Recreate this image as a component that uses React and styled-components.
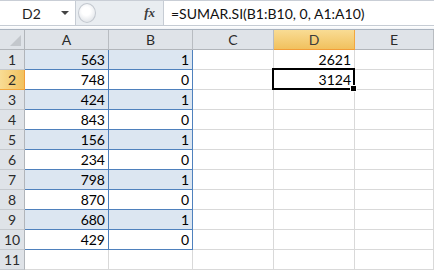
import React from 'react';
import styled, { createGlobalStyle } from 'styled-components';

const GlobalStyle = createGlobalStyle`
  html, body { margin: 0; padding: 0; background: #fff; }
  body { width: 434px; height: 270px; overflow: hidden; font-family: Lato, "Liberation Sans", sans-serif; }
`;

const Sheet = styled.div`
  width: 434px;
  height: 270px;
  display: flex;
  flex-direction: column;
  background: #fff;
  overflow: hidden;
`;

const FormulaBar = styled.div`
  height: 25px;
  display: flex;
  align-items: stretch;
  background: #e9edf1;
  border-top: 1px solid #c9ced6;
  box-sizing: border-box;
`;

const NameBox = styled.div`
  width: 76px;
  display: flex;
  align-items: center;
  justify-content: space-between;
  background: #fff;
  border-right: 1px solid #c6ccd4;
  padding: 0 6px 0 22px;
  box-sizing: border-box;
  font-size: 14px;
  color: #1e1e1e;
`;

const Arrow = styled.span`
  width: 0;
  height: 0;
  border-left: 4px solid transparent;
  border-right: 4px solid transparent;
  border-top: 4px solid #444;
`;

const Splitter = styled.div`
  width: 22px;
  display: flex;
  align-items: center;
  justify-content: flex-start;
  margin-left: 2px;
`;

const Knob = styled.div`
  width: 18px;
  height: 20px;
  border-radius: 50%;
  border: 1px solid #c3c8cf;
  background: radial-gradient(circle at 45% 40%, #ffffff 0 30%, #e6e9ed 70%);
  box-sizing: border-box;
`;

const FxArea = styled.div`
  flex: 0 0 63px;
  display: flex;
  align-items: center;
  justify-content: flex-end;
  padding-right: 8px;
  box-sizing: border-box;
  font-family: "Liberation Serif", serif;
  font-style: italic;
  font-weight: bold;
  font-size: 13px;
  color: #3c3c3c;
`;

const FormulaInput = styled.div`
  flex: 1;
  display: flex;
  align-items: center;
  background: #fff;
  border-left: 1px solid #c6ccd4;
  padding-left: 7px;
  font-size: 14px;
  color: #111;
`;

const Divider = styled.div`
  height: 5px;
  background: #fff;
  border-top: 1px solid #c6ccd4;
  border-bottom: 1px solid #a9b3bf;
  box-sizing: border-box;
  background: linear-gradient(#ffffff, #f2f4f7);
`;

const Grid = styled.div`
  display: grid;
  grid-template-columns: 25px 84px 84px 81px 81px 79px;
  grid-auto-rows: 20px;
`;

const Corner = styled.div`
  position: relative;
  background: #dfe3e8;
  border-right: 1px solid #b1b5ba;
  border-bottom: 1px solid #b1b5ba;
  box-sizing: border-box;
  &::after {
    content: '';
    position: absolute;
    right: 3px;
    bottom: 3px;
    width: 0;
    height: 0;
    border-left: 11px solid transparent;
    border-bottom: 11px solid #c3c7cc;
  }
`;

const ColHead = styled.div`
  display: flex;
  align-items: center;
  justify-content: center;
  box-sizing: border-box;
  font-size: 14px;
  color: ${p => (p.$active ? '#3b3b3b' : '#2b2b2b')};
  background: ${p => (p.$active ? 'linear-gradient(#f9dc94, #f1c15e)' : '#dfe3e8')};
  border-right: 1px solid ${p => (p.$active ? '#f2a73f' : '#b8bcc1')};
  border-bottom: 1px solid ${p => (p.$active ? '#f29d38' : '#b1b5ba')};
`;

const RowHead = styled.div`
  display: flex;
  align-items: center;
  justify-content: center;
  box-sizing: border-box;
  font-size: 14px;
  color: #2b2b2b;
  background: ${p => (p.$active ? 'linear-gradient(90deg, #f9dc94, #f1c15e)' : '#dfe3e8')};
  border-right: 1px solid ${p => (p.$active ? '#f29d38' : '#b1b5ba')};
  border-bottom: 1px solid ${p => (p.$active ? '#f2a73f' : '#c5c9ce')};
`;

const Cell = styled.div`
  position: relative;
  display: flex;
  align-items: center;
  justify-content: flex-end;
  padding-right: 3px;
  box-sizing: border-box;
  font-size: 14px;
  color: #000;
  background: ${p => (p.$band ? '#dce6f1' : '#fff')};
  border-right: 1px solid ${p => (p.$table ? '#4f81bd' : '#d9d9d9')};
  border-bottom: 1px solid ${p => (p.$table ? '#4f81bd' : '#d9d9d9')};
`;

const Selection = styled.div`
  position: absolute;
  left: -2px;
  top: -2px;
  right: -1px;
  bottom: -1px;
  border: 2px solid #000;
  pointer-events: none;
  z-index: 2;
  &::after {
    content: '';
    position: absolute;
    right: -4px;
    bottom: -4px;
    width: 5px;
    height: 5px;
    background: #000;
    border: 1px solid #fff;
  }
`;

const colA = [563, 748, 424, 843, 156, 234, 798, 870, 680, 429];
const colB = [1, 0, 1, 0, 1, 0, 1, 0, 1, 0];
const cols = ['A', 'B', 'C', 'D', 'E'];

export default function App() {
  const rows = Array.from({ length: 11 }, (_, i) => i + 1);
  return (
    <Sheet>
      <GlobalStyle />
      <FormulaBar>
        <NameBox>
          <span>D2</span>
          <Arrow />
        </NameBox>
        <Splitter>
          <Knob />
        </Splitter>
        <FxArea>fx</FxArea>
        <FormulaInput>=SUMAR.SI(B1:B10, 0, A1:A10)</FormulaInput>
      </FormulaBar>
      <Divider />
      <Grid>
        <Corner />
        {cols.map(c => (
          <ColHead key={c} $active={c === 'D'}>{c}</ColHead>
        ))}
        {rows.map(r => {
          const inTable = r <= 10;
          const band = inTable && r % 2 === 1;
          return (
            <React.Fragment key={r}>
              <RowHead $active={r === 2}>{r}</RowHead>
              <Cell $table={inTable} $band={band}>{inTable ? colA[r - 1] : ''}</Cell>
              <Cell $table={inTable} $band={band}>{inTable ? colB[r - 1] : ''}</Cell>
              <Cell />
              <Cell>
                {r === 1 && '2621'}
                {r === 2 && '3124'}
                {r === 2 && <Selection />}
              </Cell>
              <Cell />
            </React.Fragment>
          );
        })}
      </Grid>
    </Sheet>
  );
}
